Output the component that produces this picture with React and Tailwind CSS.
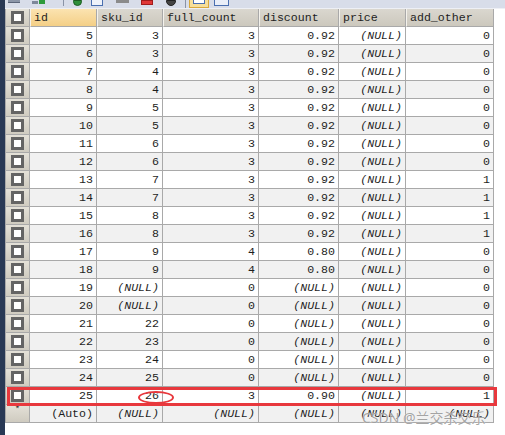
import React from "react";

const cols = [
  { key: "id", label: "id", w: "w-[67px]" },
  { key: "sku", label: "sku_id", w: "w-[66px]" },
  { key: "full", label: "full_count", w: "w-[96px]" },
  { key: "disc", label: "discount", w: "w-[80px]" },
  { key: "price", label: "price", w: "w-[67px]" },
  { key: "add", label: "add_other", w: "w-[88px]" },
];

const N = "(NULL)";

// id, sku_id, full_count, discount, price, add_other
const rows = [
  [5, 3, 3, "0.92", N, 0],
  [6, 3, 3, "0.92", N, 0],
  [7, 4, 3, "0.92", N, 0],
  [8, 4, 3, "0.92", N, 0],
  [9, 5, 3, "0.92", N, 0],
  [10, 5, 3, "0.92", N, 0],
  [11, 6, 3, "0.92", N, 0],
  [12, 6, 3, "0.92", N, 0],
  [13, 7, 3, "0.92", N, 1],
  [14, 7, 3, "0.92", N, 1],
  [15, 8, 3, "0.92", N, 1],
  [16, 8, 3, "0.92", N, 1],
  [17, 9, 4, "0.80", N, 0],
  [18, 9, 4, "0.80", N, 0],
  [19, N, 0, N, N, 0],
  [20, N, 0, N, N, 0],
  [21, 22, 0, N, N, 0],
  [22, 23, 0, N, N, 0],
  [23, 24, 0, N, N, 0],
  [24, 25, 0, N, N, 0],
  [25, 26, 3, "0.90", N, 1],
];

function Check() {
  return (
    <div className="w-[24px] h-full shrink-0 border-r border-b border-[#a9a9a9] bg-gradient-to-b from-[#e4e1d8] to-[#cfcbc0] flex items-center justify-center">
      <div className="w-[13px] h-[13px] border-[3px] border-[#646464] bg-white" />
    </div>
  );
}

function Cell({ w, value, bg }) {
  const isNull = value === N;
  return (
    <div
      className={`${w} h-full shrink-0 border-r border-b border-[#a9a9a9] ${bg} flex items-center justify-end pr-[3px] ${
        isNull ? "italic" : ""
      }`}
    >
      {value}
    </div>
  );
}

function Toolbar() {
  return (
    <div className="h-[9px] bg-[#d8dde9] border-b border-[#eef0f5] flex items-start overflow-hidden">
      <div className="ml-[3px] mt-0 w-[12px] h-[3px] bg-[#8c96a8] border-b border-[#5c667a]" />
      <div className="ml-[12px] w-[14px] h-[4px] flex items-end gap-[1px]">
        <div className="w-[6px] h-[3px] bg-[#7d8799]" />
        <div className="w-[6px] h-[4px] bg-[#2e9a3a]" />
      </div>
      <div className="ml-[17px] w-px h-[6px] bg-[#8a93a6]" />
      <div className="ml-[9px] w-[9px] h-[6px] rounded-b-full bg-[#2f8f3a] border border-[#1b5e22]" />
      <div className="ml-[9px] w-[12px] h-[6px] border border-t-0 border-[#4a6fb0] bg-[#eef2fa]" />
      <div className="ml-[13px] w-[13px] h-[3px] bg-[#8b8b8b]" />
      <div className="ml-[12px] w-[12px] h-[5px] bg-[#e03838] border border-[#a11c1c]" />
      <div className="ml-[13px] w-[10px] h-[6px] rounded-b-full bg-[#444] border border-[#222]" />
      <div className="ml-[9px] w-px h-[8px] bg-[#8a93a6]" />
      <div className="ml-[3px] w-[20px] h-[8px] bg-[#f7df9a] border border-t-0 border-[#d9a93d] flex items-start justify-center">
        <div className="w-[12px] h-[4px] border border-t-0 border-[#4a6fb0] bg-white" />
      </div>
      <div className="ml-[5px] w-[15px] h-[6px] border border-t-0 border-[#4a6fb0] bg-[#e9eef8]" />
    </div>
  );
}

export default function App() {
  return (
    <div className="relative w-[505px] h-[435px] overflow-hidden bg-white flex font-['Liberation_Mono','Courier_New',monospace] text-[11.6px] text-[#1e1e1e]">
      <div className="w-[5px] shrink-0 bg-[#293955]" />
      <div className="flex-1 flex flex-col">
        <Toolbar />
        <div className="border-l border-[#a9a9a9] w-[489px]">
          {/* Header */}
          <div className="flex h-[18px]">
            <Check />
            {cols.map((c, i) => (
              <div
                key={c.key}
                className={`${c.w} h-full shrink-0 border-r border-b border-[#a9a9a9] flex items-center pl-[3px] border-l border-l-[#f4f2ec] ${
                  i === 0
                    ? "bg-gradient-to-b from-[#fbe3b0] to-[#f4cf86]"
                    : "bg-gradient-to-b from-[#dad7cf] to-[#ccc8bd]"
                }`}
              >
                {c.label}
              </div>
            ))}
          </div>

          {/* Rows */}
          {rows.map((r, ri) => {
            const bg = ri % 2 === 0 ? "bg-white" : "bg-[#f1f1f1]";
            return (
              <div key={r[0]} className="flex h-[18px]">
                <Check />
                {cols.map((c, ci) => (
                  <Cell key={c.key} w={c.w} value={r[ci]} bg={bg} />
                ))}
              </div>
            );
          })}

          {/* New row */}
          <div className="flex h-[18px]">
            <div className="w-[24px] h-full shrink-0 border-r border-b border-[#a9a9a9] bg-gradient-to-b from-[#e4e1d8] to-[#cfcbc0] flex items-start justify-center text-[9px] leading-[10px]">
              *
            </div>
            {cols.map((c, ci) => (
              <Cell
                key={c.key}
                w={c.w}
                value={ci === 0 ? "(Auto)" : N}
                bg="bg-[#f1f1f1]"
              />
            ))}
          </div>
        </div>
      </div>

      {/* Annotation: red box around row 25 */}
      <div className="absolute left-[7px] top-[387px] w-[490px] h-[19px] border-[3px] border-[#e8383d]" />
      {/* Annotation: ellipse around 26 */}
      <div className="absolute left-[138px] top-[391px] w-[36px] h-[13px] rounded-[50%] border-2 border-[#e8383d]" />

      {/* Watermark */}
      <div className="absolute left-[362px] top-[409px] text-[14px] leading-[18px] text-[#8c8c8c]/80 font-['Noto_Sans','Noto_Sans_CJK_SC',sans-serif] [text-shadow:0_0_1px_#fff]">
        CSDN @兰交杀交乐
      </div>
    </div>
  );
}
